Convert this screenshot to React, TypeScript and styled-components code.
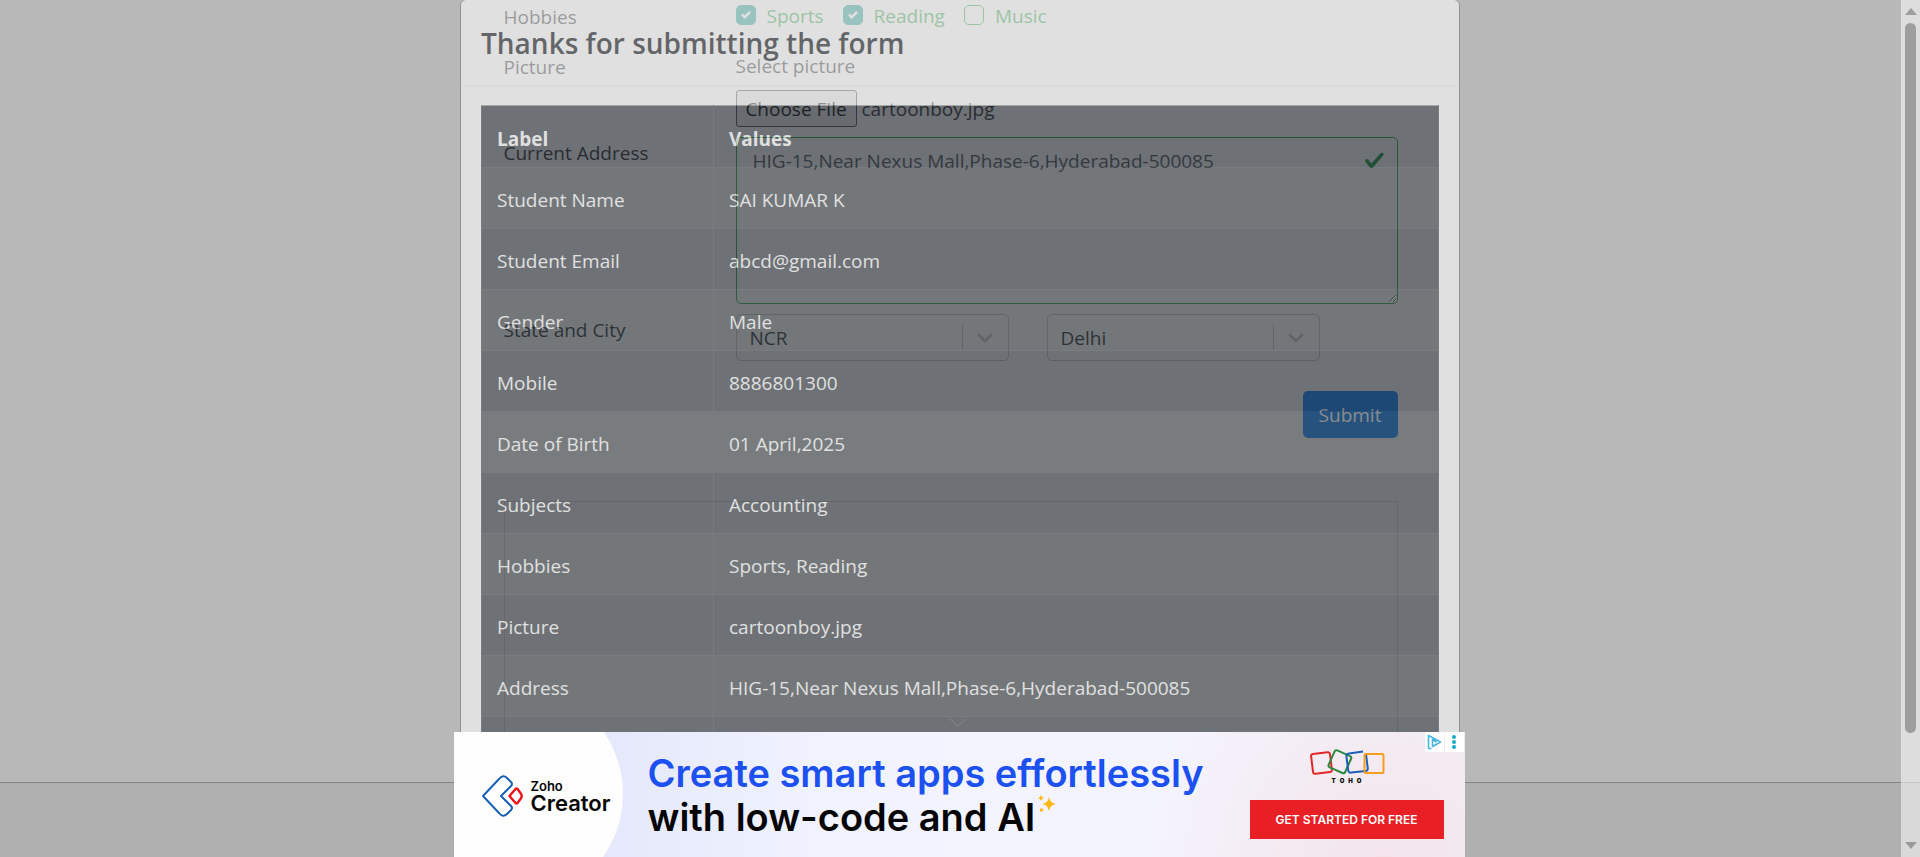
import React from 'react';
import styled, { createGlobalStyle, css } from 'styled-components';

const ink = '#181b1e';
const green = '#1d7832';
const sans = '"Open Sans", "Noto Sans", sans-serif';

const GlobalStyle = createGlobalStyle`
  *, *::before, *::after { box-sizing: border-box; }
  body {
    margin: 0;
    background: #b8b8b8;
    color: ${ink};
    font-family: ${sans};
    font-size: 19px;
    line-height: 30px;
    overflow: hidden;
  }
  input, textarea, select, button { font: inherit; color: inherit; margin: 0; }
`;

/* ---------- practice form behind the dialog ---------- */

const Page = styled.div`
  display: flex;
  flex-direction: column;
  min-height: 100vh;
  padding: 1px 19px 0 0;
`;

const Form = styled.form`
  width: 100%;
  max-width: 894px;
  margin: 0 auto;
  display: grid;
  grid-template-columns: 232px 1fr;
  row-gap: 10px;
`;

const RowLabel = styled.label`
  padding-top: 1px;
`;

const Checks = styled.div`
  display: flex;
  gap: 19px;
  height: 40px;
`;

const CheckLabel = styled.label`
  display: flex;
  gap: 11px;
  height: 30px;
  color: ${green};
`;

const CheckBox = styled.input`
  appearance: none;
  width: 20px;
  height: 20px;
  margin-top: 4px;
  border: 1px solid ${green};
  border-radius: 5px;
  &:checked {
    border-color: #17786f;
    background: #17786f
      url("data:image/svg+xml,%3Csvg xmlns='http://www.w3.org/2000/svg' viewBox='0 0 8 8'%3E%3Cpath fill='%23b8b8b8' d='M6.564.75l-3.59 3.612-1.538-1.55L0 4.26l2.974 2.99L8 2.193z'/%3E%3C/svg%3E")
      center / 10px 10px no-repeat;
  }
`;

const FileField = styled.div`
  display: flex;
  flex-direction: column;
  gap: 9px;
`;

const FileLine = styled.label`
  display: flex;
  align-items: center;
  gap: 5px;
`;

const FileButton = styled.span`
  display: flex;
  align-items: center;
  justify-content: center;
  width: 121px;
  height: 37px;
  border: 1px solid #353535;
  border-radius: 3px;
  background: #acacac;
  color: #000;
`;

const HiddenFile = styled.input`
  position: absolute;
  width: 1px;
  height: 1px;
  opacity: 0;
`;

const AddressBox = styled.div`
  position: relative;
  display: flex;
`;

const Address = styled.textarea`
  width: 100%;
  height: 167px;
  padding: 8px 48px 8px 16px;
  border: 1px solid ${green};
  border-radius: 5px;
  background: transparent;
  color: #353a3f;
  outline: none;
  resize: vertical;
`;

const Tick = styled.svg`
  position: absolute;
  top: 13px;
  right: 13px;
  width: 21px;
  height: 21px;
`;

const Selects = styled.div`
  display: flex;
  gap: 38px;
`;

const SelectBox = styled.div`
  position: relative;
  width: 273px;
`;

const Select = styled.select`
  appearance: none;
  width: 100%;
  height: 47px;
  padding: 0 60px 0 13px;
  border: 1px solid #909090;
  border-radius: 5px;
  background: transparent;
`;

const SelectMark = styled.span`
  position: absolute;
  top: 11px;
  right: 1px;
  display: flex;
  align-items: center;
  justify-content: center;
  width: 46px;
  height: 25px;
  border-left: 1px solid #909090;
  pointer-events: none;
`;

const SubmitRow = styled.div`
  grid-column: 1 / -1;
  display: flex;
  justify-content: flex-end;
  padding: 20px 0 63px;
`;

const Submit = styled.button`
  width: 95px;
  height: 47px;
  border: 0;
  border-radius: 5px;
  background: #0059b8;
  color: #dcdcdc;
`;

const Slot = styled.div`
  flex: 1;
  width: 100%;
  max-width: 894px;
  margin: 0 auto;
  border: 1px solid #a0a0a0;
  border-bottom: 0;
`;

const Footer = styled.footer`
  height: 75px;
  margin-right: -19px;
  border-top: 1px solid #858585;
  background: #b0b0b0;
`;

/* ---------- dialog, caught half way through its fade ---------- */

const Fade = styled.div`
  position: fixed;
  inset: 0;
  overflow: hidden;
  opacity: 0.56;
`;

const Dialog = styled.section`
  width: 1000px;
  max-width: 100%;
  margin: -1px auto 0;
  border: 1px solid #777;
  border-radius: 6px;
  background: #fff;
  color: #212529;
`;

const DialogHeader = styled.header`
  padding: 21px 20px 19px;
  border-bottom: 1px solid #f0f0f0;
`;

const Title = styled.h2`
  margin: 0;
  font-size: 28px;
  font-weight: 600;
  line-height: 45px;
`;

const DialogBody = styled.div`
  padding: 19px 20px;
`;

const Table = styled.table`
  width: 100%;
  border-collapse: collapse;
  border-top: 1px solid #9b9b9b;
  background: #343a40;
  color: #fff;
  font-weight: 500;
  th, td {
    height: 61px;
    padding: 4px 15px 0;
    border: 1px solid #454d55;
    text-align: left;
  }
  thead th {
    height: 62px;
    border-top-color: #9b9b9b;
  }
  th:first-child { width: 232px; }
`;

const Row = styled.tr<{ $striped: boolean; $hover: boolean }>`
  ${p => p.$striped && css`background: #3e444a;`}
  ${p => p.$hover && css`background: #474d51;`}
`;

const ScrollTrack = styled.div`
  position: absolute;
  top: 0;
  right: 0;
  bottom: 0;
  display: flex;
  flex-direction: column;
  align-items: center;
  justify-content: space-between;
  width: 19px;
  padding: 8px 0;
  background: #fafafa;
`;

const Thumb = styled.div`
  flex: 1;
  width: 11px;
  margin: 8px 0 109px;
  border-radius: 6px;
  background: #8a8a8a;
`;

const Arrow = styled.div<{ $down?: boolean }>`
  border: 6px solid transparent;
  ${p =>
    p.$down
      ? css`border-top: 7px solid #8a8a8a; border-bottom: 0;`
      : css`border-bottom: 7px solid #8a8a8a; border-top: 0;`}
`;

/* ---------- anchored advertisement ---------- */

const Anchor = styled.aside`
  position: fixed;
  bottom: 0;
  left: 0;
  right: 0;
  display: flex;
  justify-content: center;
  padding-right: 2px;
`;

const Ad = styled.div`
  position: relative;
  display: flex;
  width: 1011px;
  height: 125px;
  background:
    radial-gradient(circle at 92% 110%, #f3e4ea 0, rgba(243, 228, 234, 0) 240px),
    linear-gradient(90deg, #e6e9fb 168px, #f1f3ff 380px, #f4f4ff 700px, #f4f0f8 100%);
  color: #050505;
  font-family: Inter, sans-serif;
  font-weight: 600;
`;

const Collapse = styled.svg`
  position: absolute;
  top: -14px;
  left: 495px;
  width: 18px;
  height: 10px;
`;

const Brand = styled.div`
  position: relative;
  display: flex;
  align-items: center;
  gap: 8px;
  width: 169px;
  padding: 2px 0 0 28px;
  overflow: hidden;
  &::before {
    content: '';
    position: absolute;
    top: -48px;
    right: 0;
    width: 220px;
    height: 220px;
    border-radius: 50%;
    background: #fefefe;
  }
  > * { position: relative; }
`;

const BrandName = styled.div`
  display: flex;
  flex-direction: column;
  font-size: 22px;
  line-height: 20px;
`;

const BrandTop = styled.span`
  font-size: 13px;
  line-height: 14px;
`;

const Pitch = styled.div`
  flex: 1;
  padding: 19px 0 0 25px;
  font-size: 38px;
  line-height: 44px;
  white-space: nowrap;
`;

const Blue = styled.div`
  color: #1d50f0;
`;

const Second = styled.div`
  display: flex;
  gap: 3px;
`;

const Action = styled.div`
  display: flex;
  flex-direction: column;
  align-items: center;
  width: 194px;
  margin-right: 21px;
  padding-top: 16px;
`;

const Wordmark = styled.div`
  display: flex;
  gap: 4px;
  margin: 2px 0 15px;
  font-size: 6px;
  font-weight: 900;
  line-height: 8px;
`;

const AdButton = styled.button`
  width: 100%;
  height: 39px;
  padding: 0;
  border: 0;
  background: #e81f25;
  color: #fff;
  font-size: 12px;
`;

const Badges = styled.div`
  position: absolute;
  top: 0;
  right: 1px;
  display: flex;
  gap: 1px;
`;

const Badge = styled.button`
  display: flex;
  align-items: center;
  justify-content: center;
  width: 19px;
  height: 20px;
  padding: 0;
  border: 0;
  background: #fff;
`;

const rows = [
  ['Student Name', 'SAI KUMAR K'],
  ['Student Email', 'abcd@gmail.com'],
  ['Gender', 'Male'],
  ['Mobile', '8886801300'],
  ['Date of Birth', '01 April,2025'],
  ['Subjects', 'Accounting'],
  ['Hobbies', 'Sports, Reading'],
  ['Picture', 'cartoonboy.jpg'],
  ['Address', 'HIG-15,Near Nexus Mall,Phase-6,Hyderabad-500085'],
  ['', ''],
];

const hobbies = [
  { name: 'Sports', on: true },
  { name: 'Reading', on: true },
  { name: 'Music', on: false },
];

function Dropdown({ id, value, label }: { id: string; value: string; label: string }) {
  return (
    <SelectBox>
      <Select id={id} aria-label={label} defaultValue={value}>
        <option>{value}</option>
      </Select>
      <SelectMark>
        <svg width="16" height="10" viewBox="0 0 16 10" fill="none" stroke="#909090" strokeWidth="3" strokeLinecap="round" strokeLinejoin="round">
          <path d="M2 2l6 6 6-6" />
        </svg>
      </SelectMark>
    </SelectBox>
  );
}

export default function App() {
  return (
    <>
      <GlobalStyle />
      <Page>
        <Form onSubmit={e => e.preventDefault()}>
          <RowLabel as="span">Hobbies</RowLabel>
          <Checks>
            {hobbies.map(h => (
              <CheckLabel key={h.name}>
                <CheckBox type="checkbox" defaultChecked={h.on} />
                {h.name}
              </CheckLabel>
            ))}
          </Checks>

          <RowLabel htmlFor="picture">Picture</RowLabel>
          <FileField>
            <span>Select picture</span>
            <FileLine>
              <HiddenFile id="picture" type="file" />
              <FileButton>Choose File</FileButton>
              cartoonboy.jpg
            </FileLine>
          </FileField>

          <RowLabel htmlFor="address">Current Address</RowLabel>
          <AddressBox>
            <Address id="address" spellCheck={false} defaultValue="HIG-15,Near Nexus Mall,Phase-6,Hyderabad-500085" />
            <Tick viewBox="0 0 8 8" aria-hidden>
              <path fill="#0f6a2c" d="M2.3 6.73L.6 4.53c-.4-1.04.46-1.4 1.1-.8l1.1 1.4 3.4-3.8c.6-.63 1.6-.27 1.2.7l-4 4.6c-.43.5-.8.4-1.1.1z" />
            </Tick>
          </AddressBox>

          <RowLabel htmlFor="state">State and City</RowLabel>
          <Selects>
            <Dropdown id="state" value="NCR" label="State" />
            <Dropdown id="city" value="Delhi" label="City" />
          </Selects>

          <SubmitRow>
            <Submit type="submit">Submit</Submit>
          </SubmitRow>
        </Form>
        <Slot />
        <Footer />
      </Page>

      <Fade>
        <Dialog role="dialog" aria-labelledby="dialog-title">
          <DialogHeader>
            <Title id="dialog-title">Thanks for submitting the form</Title>
          </DialogHeader>
          <DialogBody>
            <Table>
              <thead>
                <tr>
                  <th>Label</th>
                  <th>Values</th>
                </tr>
              </thead>
              <tbody>
                {rows.map(([label, value], i) => (
                  <Row key={i} $striped={i % 2 === 0} $hover={label === 'Date of Birth'}>
                    <td>{label}</td>
                    <td>{value}</td>
                  </Row>
                ))}
              </tbody>
            </Table>
          </DialogBody>
        </Dialog>
        <ScrollTrack aria-hidden>
          <Arrow />
          <Thumb />
          <Arrow $down />
        </ScrollTrack>
      </Fade>

      <Anchor>
        <Ad>
          <Collapse viewBox="0 0 18 10" fill="none" stroke="#7f7f7f" strokeWidth="1.5" aria-hidden>
            <path d="M1 1l8 7 8-7" />
          </Collapse>
          <Brand>
            <svg width="41" height="42" viewBox="0 0 41 42" fill="none" strokeWidth="2" strokeLinejoin="round" aria-hidden>
              <path stroke="#1a5fb4" d="M1 21L17 4q4-5 8-1l4 4q2 2 0 4L19 21l10 10q2 2 0 4l-4 4q-4 4-8-1z" />
              <path stroke="#ec1218" strokeWidth="2.4" d="M27.500 21l6-7q1-1 2 0l3 4q2.500 3 0 6l-3 4q-1 1-2 0z" />
            </svg>
            <BrandName>
              <BrandTop>Zoho</BrandTop>
              Creator
            </BrandName>
          </Brand>
          <Pitch>
            <Blue>Create smart apps effortlessly</Blue>
            <Second>
              with low-code and AI
              <svg width="18" height="18" viewBox="0 0 18 18" fill="#fdb813" aria-hidden>
                <path d="M11 2q1 6 7 7-6 1-7 7-1-6-7-7 6-1 7-7z" />
                <path d="M3 0q.6 2.600 3 3-2.400.600-3 3-.600-2.400-3-3 2.400-.400 3-3z" />
                <circle cx="3.500" cy="15" r="1.700" />
              </svg>
            </Second>
          </Pitch>
          <Action>
            <svg width="76" height="27" viewBox="0 0 76 27" fill="none" strokeWidth="2" strokeLinejoin="round" aria-hidden>
              <rect x="3" y="5" width="19" height="20" rx="2" stroke="#e42527" transform="rotate(-7 12.500 15)" />
              <rect x="22" y="4.500" width="18" height="18.500" rx="2" stroke="#2b8a3e" transform="rotate(24 31 13.500)" />
              <path d="M54 3.500l-14 2q-3 .4-2.600 3l1.800 13.500q.4 3 3 2.600l14.500-1.600q2.500-.4 2-3L57 6" stroke="#1a5fb4" />
              <rect x="55.500" y="6" width="19" height="19" rx="1.500" stroke="#f79d1e" />
            </svg>
            <Wordmark>
              <span>T</span>
              <span>O</span>
              <span>H</span>
              <span>O</span>
            </Wordmark>
            <AdButton type="button">GET STARTED FOR FREE</AdButton>
          </Action>
          <Badges>
            <Badge type="button" aria-label="About this ad">
              <svg width="15" height="16" viewBox="0 0 15 16" fill="none" stroke="#45b4e0" strokeWidth="1.600" strokeLinejoin="round">
                <path d="M4.500 14.500H1.500V1.500L13.500 8l-8 4.500V5.500l4 2.500" />
              </svg>
            </Badge>
            <Badge type="button" aria-label="More options">
              <svg width="4" height="14" viewBox="0 0 4 14" fill="#16a9c9">
                <circle cx="2" cy="2" r="2" />
                <circle cx="2" cy="7" r="2" />
                <circle cx="2" cy="12" r="2" />
              </svg>
            </Badge>
          </Badges>
        </Ad>
      </Anchor>
    </>
  );
}
